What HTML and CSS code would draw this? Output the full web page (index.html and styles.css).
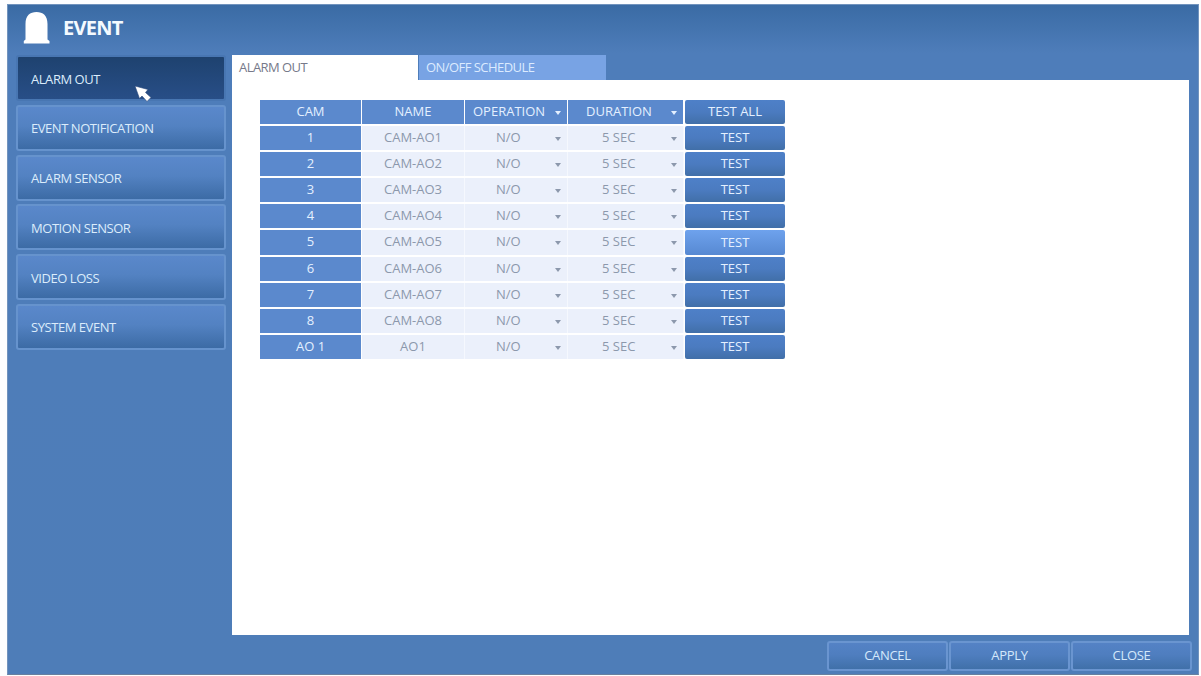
FILE: index.html
```html
<!DOCTYPE html>
<html lang="en">
<head>
  <meta charset="UTF-8">
  <meta name="viewport" content="width=device-width, initial-scale=1.0">
  <title>Event</title>
  <link rel="stylesheet" href="styles.css">
</head>
<body>
  <div class="window">
    <header class="header">
      <svg class="alarm-icon" width="28" height="33" viewBox="0 0 28 33">
        <path d="M2.500 28.500V13C2.500 4.500 7 1 13.500 1s11 3.500 11 12v15.500l2 1.500v2.500H.800V30z" fill="#fff"/>
      </svg>
      <h1>EVENT</h1>
    </header>

    <div class="main">
      <!-- Side menu -->
      <nav class="sidebar">
        <button class="menu-item active">ALARM OUT</button>
        <button class="menu-item">EVENT NOTIFICATION</button>
        <button class="menu-item">ALARM SENSOR</button>
        <button class="menu-item">MOTION SENSOR</button>
        <button class="menu-item">VIDEO LOSS</button>
        <button class="menu-item">SYSTEM EVENT</button>
        <svg class="cursor" width="18" height="18" viewBox="0 0 18 18">
          <path d="M1 1L14 4.500 11.500 7.500 17 12.500 13 16.500 8 11 5.500 13.500z" fill="#fff" stroke="#29467a" stroke-width=".6"/>
        </svg>
      </nav>

      <section class="content">
        <div class="tabs">
          <button class="tab active">ALARM OUT</button>
          <button class="tab">ON/OFF SCHEDULE</button>
        </div>
        <div class="panel">
          <div class="table" id="alarmTable">
            <div class="head">CAM</div>
            <div class="head">NAME</div>
            <div class="head select operation">OPERATION<i></i></div>
            <div class="head select duration">DURATION<i></i></div>
            <button class="test">TEST ALL</button>
          </div>
        </div>
      </section>
    </div>

    <footer class="footer">
      <button>CANCEL</button>
      <button>APPLY</button>
      <button>CLOSE</button>
    </footer>
  </div>

  <script>
    const rows = [];
    for (let i = 1; i <= 8; i++) {
      rows.push({ cam: i, name: "CAM-AO" + i });
    }
    rows.push({ cam: "AO 1", name: "AO1" });

    // Fill the alarm table, camera 5 is the highlighted one
    const table = document.getElementById("alarmTable");
    rows.forEach(function (row) {
      const hot = row.cam === 5 ? " hot" : "";
      table.insertAdjacentHTML("beforeend",
        '<div class="cam">' + row.cam + '</div>' +
        '<div class="cell">' + row.name + '</div>' +
        '<div class="cell select operation">N/O<i></i></div>' +
        '<div class="cell select duration">5 SEC<i></i></div>' +
        '<button class="test' + hot + '">TEST</button>');
    });
  </script>
</body>
</html>
```

FILE: styles.css
```css
* {
  box-sizing: border-box;
}
body {
  margin: 0;
  padding: 4px 2px 1px 7px;
  height: 676px;
  overflow: hidden;
  background-color: #fdfeff;
  font-family: "Open Sans", "Noto Sans", sans-serif;
  font-size: 13px;
}
button {
  margin: 0;
  padding: 0;
  border: none;
  font: inherit;
  color: inherit;
  letter-spacing: inherit;
  white-space: nowrap;
}
.window {
  display: flex;
  flex-direction: column;
  height: 671px;
  padding: 0 6px 0 8px;
  background: linear-gradient(#3a6ba4 0, #4e7dba 48px, #4e7db8 100%);
  border: 1px solid #7193bd;
  border-bottom-color: #68809f;
}
.header {
  display: flex;
  align-items: center;
  height: 50px;
  padding-left: 7px;
}
.alarm-icon {
  margin-top: -6px;
}
.header h1 {
  margin: -5px 0 0 12px;
  color: #f4faff;
  font-size: 20px;
  line-height: 28px;
  letter-spacing: -0.75px;
}
.main {
  display: flex;
  gap: 6px;
  height: 580px;
}

/* Side menu */
.sidebar {
  position: relative;
  display: flex;
  flex-direction: column;
  gap: 3.8px;
  width: 210px;
}
.menu-item {
  height: 46px;
  padding: 1px 0 0 13px;
  text-align: left;
  color: #dcecfb;
  letter-spacing: -0.45px;
  background: linear-gradient(#5a88cb, #5382c2 45%, #3c6ba5);
  border: 2px solid #6693cd;
  border-radius: 3px;
}
.menu-item.active {
  background: linear-gradient(#1e426f, #284e87);
  border-color: #4876b2;
}
.cursor {
  position: absolute;
  left: 118px;
  top: 30px;
}

/* Tabs and panel */
.content {
  width: 957px;
}
.tabs {
  display: flex;
  gap: 1px;
  height: 25px;
}
.tab {
  width: 187px;
  padding: 0 0 2px 7px;
  text-align: left;
  color: #dcebff;
  letter-spacing: -0.55px;
  background-color: #78a3e4;
}
.tab.active {
  width: 186px;
  color: #76798a;
  background-color: #fff;
}
.panel {
  height: 555px;
  padding: 20px 28px;
  background-color: #fff;
}

/* Alarm table */
.table {
  display: grid;
  grid-template-columns: 102px 103px 103px 116px 99px;
  grid-template-rows: repeat(10, 24.1px);
  row-gap: 2px;
  line-height: 22px;
  text-align: center;
}
.head,
.cam {
  color: #e4f0ff;
  background-color: #5b89cd;
  border-right: 1px solid #fff;
}
.cell {
  color: #8c98ac;
  background-color: #ebf0fb;
  border-right: 1px solid #f5f8fe;
}
.select {
  display: flex;
  justify-content: space-between;
}
.select i {
  width: 0;
  height: 0;
  margin: 11px 6px 0 0;
  border: 3.5px solid transparent;
  border-top: 4px solid currentColor;
  border-bottom: 0;
}
.operation {
  padding-left: 8px;
}
.duration {
  padding-left: 18px;
}
.cell.operation {
  padding-left: 31px;
}
.cell.duration {
  padding-left: 34px;
}
.test {
  margin-left: 1px;
  padding-bottom: 2px;
  width: 100px;
  color: #e4f0ff;
  background: linear-gradient(#4e80c8, #4b7bc0 50%, #416fa8);
  border-radius: 2px;
}
.test.hot {
  background: linear-gradient(#6ea2ed, #5789d2);
}

/* Bottom buttons */
.footer {
  display: flex;
  justify-content: flex-end;
  gap: 1px;
  padding-top: 6px;
}
.footer button {
  width: 121px;
  height: 30px;
  padding-bottom: 2px;
  color: #d4e8fb;
  letter-spacing: -0.3px;
  background: linear-gradient(#5482c5, #4f7ebf 45%, #4070a9);
  border: 2px solid #6a95d0;
  border-radius: 3px;
}
```
